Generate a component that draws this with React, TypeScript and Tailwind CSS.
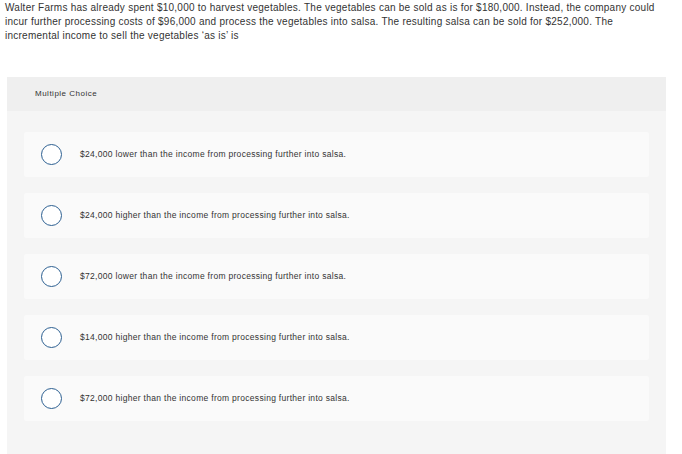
import React from "react";

const options = [
  "$24,000 lower than the income from processing further into salsa.",
  "$24,000 higher than the income from processing further into salsa.",
  "$72,000 lower than the income from processing further into salsa.",
  "$14,000 higher than the income from processing further into salsa.",
  "$72,000 higher than the income from processing further into salsa.",
];

export default function App() {
  return (
    <div className="w-[682px] h-[454px] bg-white overflow-hidden text-[#333]" style={{ fontFamily: '"Liberation Sans", Arial, sans-serif' }}>
      <p className="px-[5px] pt-[1px] text-[10px] leading-[14px] tracking-[0.25px] w-[666px]">
        Walter Farms has already spent $10,000 to harvest vegetables. The vegetables can be sold as is for $180,000. Instead, the company could incur further processing costs of $96,000 and process the vegetables into salsa. The resulting salsa can be sold for $252,000. The incremental income to sell the vegetables ‘as is’ is
      </p>
      <div className="ml-[7px] mt-[34px] w-[659px] bg-[#f5f5f5] pb-[40px]">
        <div className="h-[34px] bg-[#efefef] flex items-center pl-[28px] text-[8px] tracking-[0.5px]">Multiple Choice</div>
        <div className="flex flex-col gap-[16px] pt-[21px] px-[17px]">
          {options.map((o) => (
            <div key={o} className="h-[45px] bg-[#fafafa] rounded-[2px] flex items-center">
              <div className="ml-[17px] w-[21px] h-[21px] rounded-full border-[1.5px] border-[#2c5f91] bg-white shrink-0" />
              <span className="ml-[18px] text-[8.5px] tracking-[0.3px]">{o}</span>
            </div>
          ))}
        </div>
      </div>
    </div>
  );
}
